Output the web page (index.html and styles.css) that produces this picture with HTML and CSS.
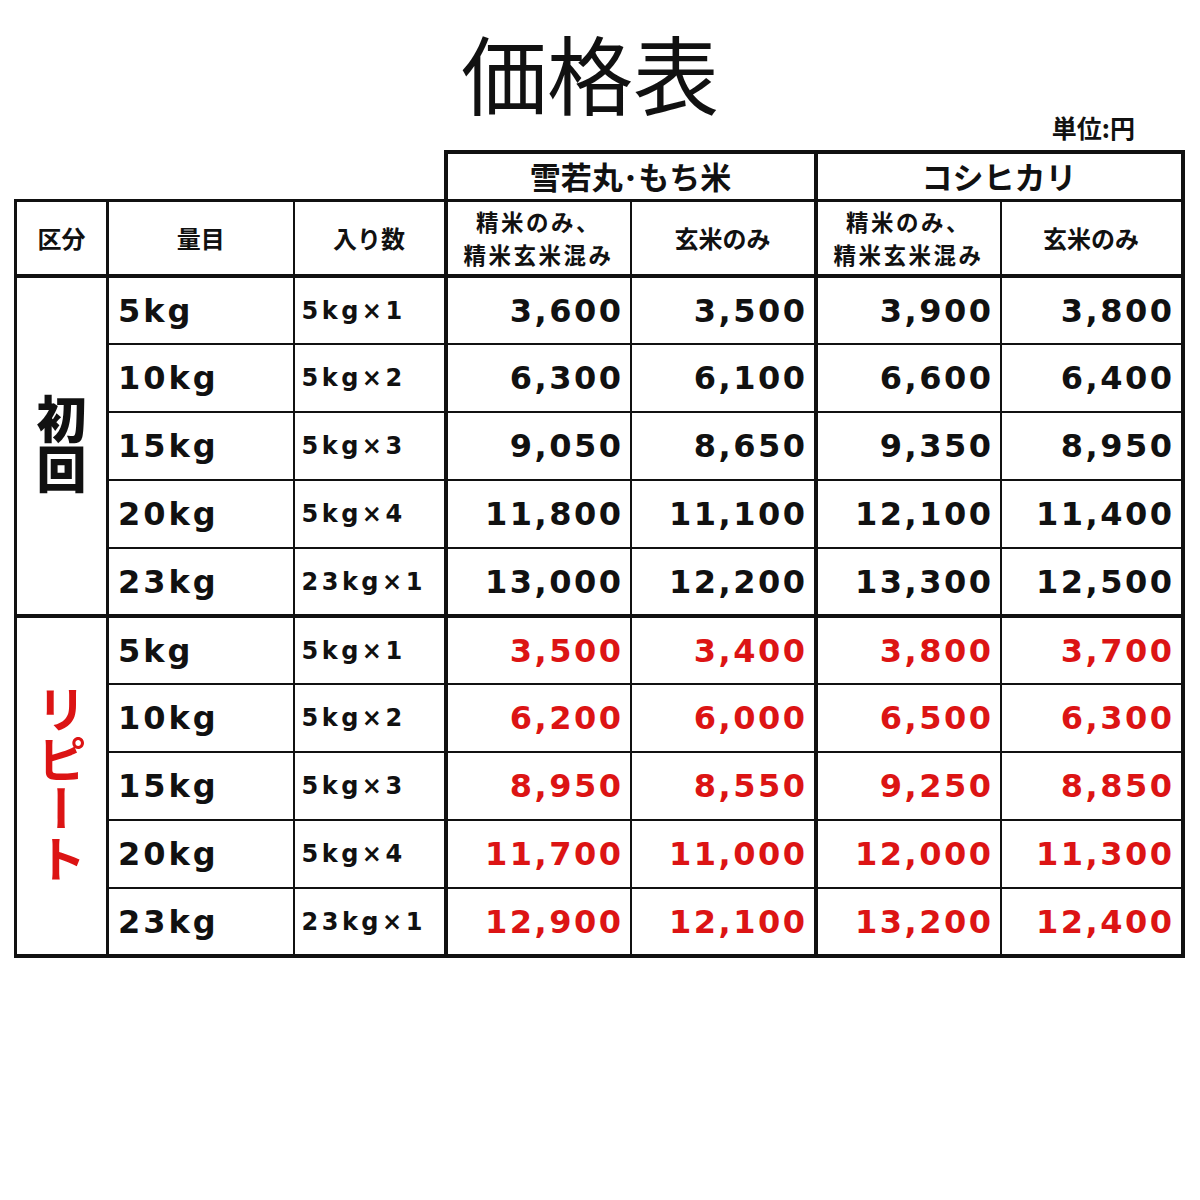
FILE: index.html
```html
<!DOCTYPE html>
<html lang="ja">
<head>
<meta charset="utf-8">
<title>価格表</title>
<link rel="stylesheet" href="styles.css">
</head>
<body>
<div class="page">
  <h1 class="title">価格表</h1>
  <div class="unit">単位:円</div>
  <table class="price">
    <colgroup>
      <col class="c-cat"><col class="c-amt"><col class="c-qty"><col class="c-p"><col class="c-p"><col class="c-p"><col class="c-p4">
    </colgroup>
    <thead>
      <tr class="group-row">
        <th colspan="3" class="blank"></th>
        <th colspan="2" class="grp grp-l">雪若丸･もち米</th>
        <th colspan="2" class="grp grp-r">コシヒカリ</th>
      </tr>
      <tr class="head-row">
        <th class="cat">区分</th>
        <th class="amt-h">量目</th>
        <th class="qty">入り数</th>
        <th class="p1 two">精米のみ、<br>精米玄米混み</th>
        <th class="p2">玄米のみ</th>
        <th class="p3 two">精米のみ、<br>精米玄米混み</th>
        <th class="p4">玄米のみ</th>
      </tr>
    </thead>
    <tbody class="first">
      <tr><td rowspan="5" class="cat"><span class="vert">初回</span></td><td class="amt">5kg</td><td class="qty">5kg×1</td><td class="p p1">3,600</td><td class="p p2">3,500</td><td class="p p3">3,900</td><td class="p p4">3,800</td></tr>
      <tr><td class="amt">10kg</td><td class="qty">5kg×2</td><td class="p p1">6,300</td><td class="p p2">6,100</td><td class="p p3">6,600</td><td class="p p4">6,400</td></tr>
      <tr><td class="amt">15kg</td><td class="qty">5kg×3</td><td class="p p1">9,050</td><td class="p p2">8,650</td><td class="p p3">9,350</td><td class="p p4">8,950</td></tr>
      <tr><td class="amt">20kg</td><td class="qty">5kg×4</td><td class="p p1">11,800</td><td class="p p2">11,100</td><td class="p p3">12,100</td><td class="p p4">11,400</td></tr>
      <tr class="last"><td class="amt">23kg</td><td class="qty">23kg×1</td><td class="p p1">13,000</td><td class="p p2">12,200</td><td class="p p3">13,300</td><td class="p p4">12,500</td></tr>
    </tbody>
    <tbody class="repeat">
      <tr><td rowspan="5" class="cat"><span class="vert red">リピート</span></td><td class="amt">5kg</td><td class="qty">5kg×1</td><td class="p p1">3,500</td><td class="p p2">3,400</td><td class="p p3">3,800</td><td class="p p4">3,700</td></tr>
      <tr><td class="amt">10kg</td><td class="qty">5kg×2</td><td class="p p1">6,200</td><td class="p p2">6,000</td><td class="p p3">6,500</td><td class="p p4">6,300</td></tr>
      <tr><td class="amt">15kg</td><td class="qty">5kg×3</td><td class="p p1">8,950</td><td class="p p2">8,550</td><td class="p p3">9,250</td><td class="p p4">8,850</td></tr>
      <tr><td class="amt">20kg</td><td class="qty">5kg×4</td><td class="p p1">11,700</td><td class="p p2">11,000</td><td class="p p3">12,000</td><td class="p p4">11,300</td></tr>
      <tr class="last"><td class="amt">23kg</td><td class="qty">23kg×1</td><td class="p p1">12,900</td><td class="p p2">12,100</td><td class="p p3">13,200</td><td class="p p4">12,400</td></tr>
    </tbody>
  </table>
</div>
</body>
</html>
```
FILE: styles.css
```css
html, body {
  margin: 0;
  padding: 0;
  background: #ffffff;
}
body {
  font-family: "Noto Sans CJK JP", "Noto Sans", sans-serif;
  color: #111;
}
.page {
  width: 1200px;
  height: 1200px;
}
.title {
  margin: 0;
  padding: 29px 20px 0 0;
  height: 86px;
  font-size: 86px;
  line-height: 86px;
  font-weight: 400;
  text-align: center;
  color: #111;
}
.unit {
  font-size: 25px;
  line-height: 25px;
  font-weight: 700;
  text-align: right;
  padding-right: 65px;
  margin-bottom: 10px;
}
.price {
  margin-left: 14px;
  border-collapse: collapse;
  table-layout: fixed;
  width: 1170px;
}
.c-cat { width: 92px; }
.c-amt { width: 186px; }
.c-qty { width: 152px; }
.c-p { width: 185px; }
.c-p4 { width: 182px; }

.price th, .price td {
  border: 2px solid #111;
  padding: 0;
}
.price th {
  font-family: "Noto Sans CJK JP", sans-serif;
  font-weight: 700;
  font-size: 24px;
  line-height: 30px;
  text-align: center;
}
.price th.two {
  font-size: 22.5px;
  line-height: 33px;
  letter-spacing: 2.5px;
}
.price .blank {
  border: none;
}
.group-row {
  height: 48px;
}
.price th.grp {
  font-size: 31px;
  line-height: 40px;
  border-top: 4px solid #111;
  border-bottom: 3px solid #111;
}
.price th.grp-l { border-left: 4px solid #111; border-right: 4px solid #111; }
.price th.grp-r { border-right: 4px solid #111; }

.head-row {
  height: 76px;
}
.head-row th {
  border-top: 3px solid #111;
  border-bottom: 4px solid #111;
}
.price .cat {
  border-left: 3px solid #111;
  border-right: 3px solid #111;
}
.price .qty {
  border-right: 4px solid #111;
}
.price .p2 {
  border-right: 4px solid #111;
}
.price .p4 {
  border-right: 4px solid #111;
}
tbody tr {
  height: 68px;
}
.first .last td, .first .cat {
  border-bottom: 4px solid #111;
}
.repeat .last td, .repeat .cat {
  border-bottom: 4px solid #111;
}
.price td {
  font-family: "DejaVu Sans", sans-serif;
  font-weight: 700;
  color: #111;
  white-space: nowrap;
}
.price td.cat {
  text-align: center;
  vertical-align: middle;
}
.vert {
  display: inline-block;
  writing-mode: vertical-rl;
  font-family: "Noto Sans CJK JP", sans-serif;
  font-weight: 900;
  font-size: 50px;
  line-height: 50px;
  color: #111;
}
.vert.red {
  color: #dc1414;
  font-weight: 700;
}
.price td.amt {
  font-size: 32px;
  letter-spacing: 3px;
  padding-left: 9px;
  text-align: left;
}
.price td.qty {
  font-size: 24px;
  letter-spacing: 3.5px;
  padding-left: 7px;
  text-align: left;
}
.price td.p {
  font-size: 32px;
  letter-spacing: 2.5px;
  text-align: right;
  padding-right: 6px;
}
.repeat td.p {
  color: #dc1414;
}
```
